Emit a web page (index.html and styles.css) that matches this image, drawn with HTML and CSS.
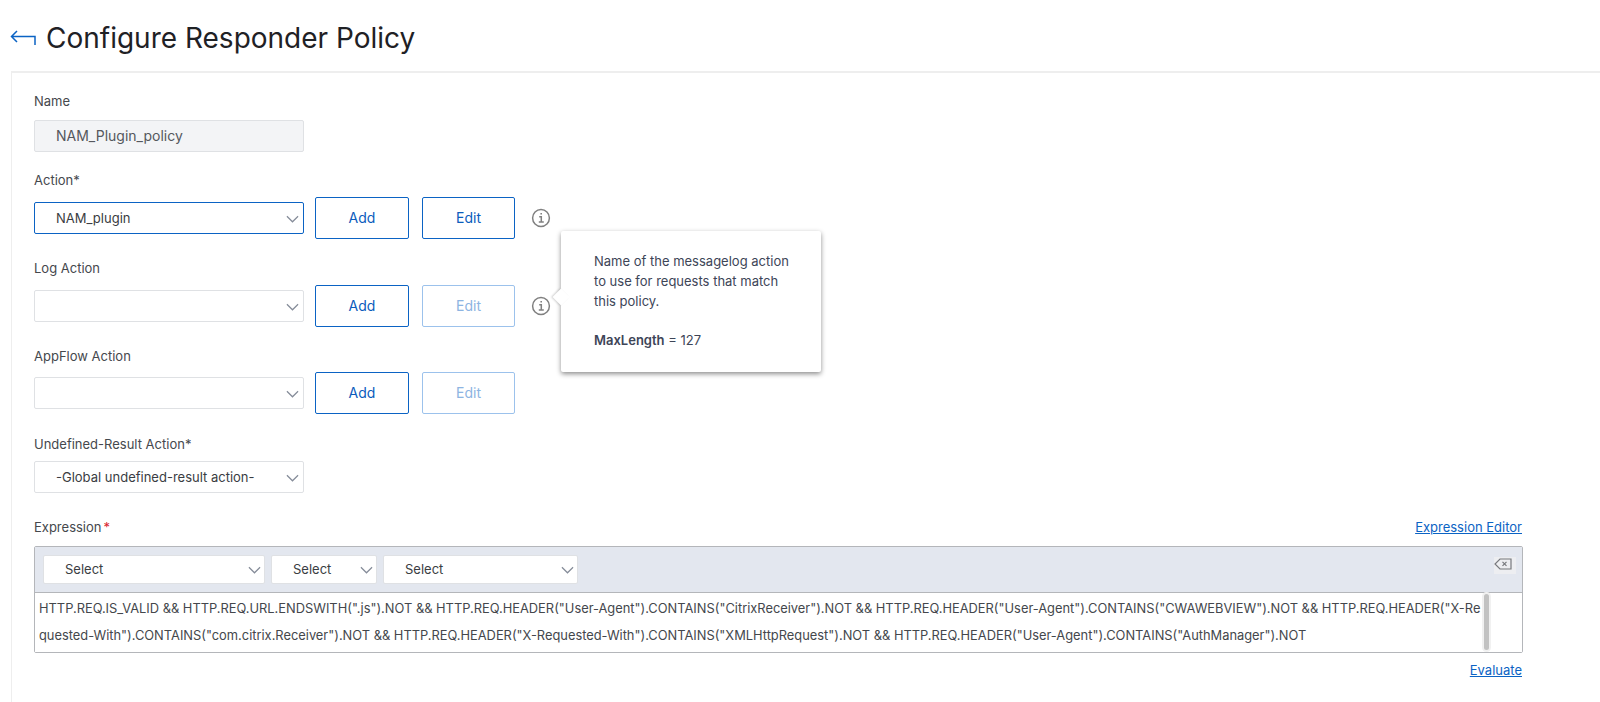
FILE: index.html
```html
<!DOCTYPE html>
<html lang="en">
<head>
<meta charset="utf-8">
<title>Configure Responder Policy</title>
<link rel="stylesheet" href="styles.css">
</head>
<body>
<header class="page-head">
  <svg class="back" width="26" height="16" viewBox="0 0 26 16" fill="none"><path d="M7 1 1.500 6.500 7 12M2 6.500h23v8.500" stroke="#0b63c4" stroke-width="1.500"/></svg>
  <h1 class="title">Configure Responder Policy</h1>
</header>
<main class="panel">
  <section class="field">
    <div class="label">Name</div>
    <div class="control disabled">NAM_Plugin_policy</div>
  </section>
  <section class="field action">
    <div class="label">Action*</div>
    <div class="row">
      <div class="control focus">NAM_plugin<svg class="chev" width="13" height="8" viewBox="0 0 14 8"><path d="M1 1l6 6 6-6" fill="none" stroke="#858c99" stroke-width="1.300"/></svg></div>
      <button class="btn">Add</button>
      <button class="btn">Edit</button>
      <svg class="info" width="20" height="20" viewBox="0 0 20 20" fill="none"><circle cx="10" cy="10" r="8.400" stroke="#808080" stroke-width="1.500"/><path d="M8.200 8.800h2.100v5M7.800 14h5M9.400 5.700h1.600" stroke="#808080" stroke-width="1.500"/></svg>
    </div>
  </section>
  <section class="field log">
    <div class="label">Log Action</div>
    <div class="row">
      <div class="control"><svg class="chev" width="13" height="8" viewBox="0 0 14 8"><path d="M1 1l6 6 6-6" fill="none" stroke="#858c99" stroke-width="1.300"/></svg></div>
      <button class="btn">Add</button>
      <button class="btn off">Edit</button>
      <svg class="info" width="20" height="20" viewBox="0 0 20 20" fill="none"><circle cx="10" cy="10" r="8.400" stroke="#808080" stroke-width="1.500"/><path d="M8.200 8.800h2.100v5M7.800 14h5M9.400 5.700h1.600" stroke="#808080" stroke-width="1.500"/></svg>
    </div>
  </section>
  <section class="field appflow">
    <div class="label">AppFlow Action</div>
    <div class="row">
      <div class="control"><svg class="chev" width="13" height="8" viewBox="0 0 14 8"><path d="M1 1l6 6 6-6" fill="none" stroke="#858c99" stroke-width="1.300"/></svg></div>
      <button class="btn">Add</button>
      <button class="btn off">Edit</button>
    </div>
  </section>
  <section class="field undefined">
    <div class="label">Undefined-Result Action*</div>
    <div class="control">-Global undefined-result action-<svg class="chev" width="13" height="8" viewBox="0 0 14 8"><path d="M1 1l6 6 6-6" fill="none" stroke="#858c99" stroke-width="1.300"/></svg></div>
  </section>
  <section class="field expr">
    <div class="expr-head">
      <div class="label">Expression<span class="req">*</span></div>
      <a class="link" href="#">Expression Editor</a>
    </div>
    <div class="editor">
      <div class="toolbar">
        <div class="mini w1">Select<svg class="chev" width="13" height="8" viewBox="0 0 14 8"><path d="M1 1l6 6 6-6" fill="none" stroke="#858c99" stroke-width="1.300"/></svg></div>
        <div class="mini w2">Select<svg class="chev" width="13" height="8" viewBox="0 0 14 8"><path d="M1 1l6 6 6-6" fill="none" stroke="#858c99" stroke-width="1.300"/></svg></div>
        <div class="mini w3">Select<svg class="chev" width="13" height="8" viewBox="0 0 14 8"><path d="M1 1l6 6 6-6" fill="none" stroke="#858c99" stroke-width="1.300"/></svg></div>
        <div class="clear"><svg width="18" height="12" viewBox="0 0 18 12" fill="none"><path d="M6 1h11v10H6L1 6z" stroke="#77797d" stroke-width="1.200"/><path d="M8.500 3.800l4 4M12.500 3.800l-4 4" stroke="#77797d" stroke-width="1.200"/></svg></div>
      </div>
      <div class="code">
        <p class="code-text">HTTP.REQ.IS_VALID &amp;&amp; HTTP.REQ.URL.ENDSWITH(".js").NOT &amp;&amp; HTTP.REQ.HEADER("User-Agent").CONTAINS("CitrixReceiver").NOT &amp;&amp; HTTP.REQ.HEADER("User-Agent").CONTAINS("CWAWEBVIEW").NOT &amp;&amp; HTTP.REQ.HEADER("X-Requested-With").CONTAINS("com.citrix.Receiver").NOT &amp;&amp; HTTP.REQ.HEADER("X-Requested-With").CONTAINS("XMLHttpRequest").NOT &amp;&amp; HTTP.REQ.HEADER("User-Agent").CONTAINS("AuthManager").NOT</p>
        <div class="scroll"></div>
      </div>
    </div>
    <div class="eval-row"><a class="link" href="#">Evaluate</a></div>
  </section>
  <aside class="tip">
    <p class="tip-text">Name of the messagelog action to use for requests that match this policy.</p>
    <p class="tip-text tip-max"><b>MaxLength</b> = 127</p>
  </aside>
</main>
</body>
</html>
```
FILE: styles.css
```css
* { box-sizing: border-box; }
html, body { margin: 0; height: 100%; }
body { background: #fff; font-family: Inter, "Liberation Sans", sans-serif; color: #3f4247; font-size: 13px; overflow: hidden; }
.page-head { height: 71px; display: flex; align-items: center; padding: 4px 0 0 10px; }
.title { margin: 0 0 0 10px; font-size: 28px; font-weight: 400; color: #1f2125; line-height: 36px; }
.panel { position: relative; margin-left: 11px; height: 631px; border-top: 2px solid #eeeeee; border-left: 1px solid #eeeeee; padding: 20px 0 0 22px; }
.label { font-size: 13px; line-height: 16px; color: #45484d; }
.field .control { margin-top: 11px; }
.control { position: relative; width: 270px; height: 32px; border: 1px solid #dfe1e4; border-radius: 2px; padding-left: 21px; line-height: 30px; font-size: 13px; color: #3a3d42; background: #fff; }
.control.disabled { background: #f3f4f6; color: #55585d; font-size: 14px; }
.control.focus { border-color: #0b63c4; }
.chev { position: absolute; right: 4px; top: 12px; }
.mini .chev { top: 10px; right: 3px; }
.row { display: flex; align-items: center; margin-top: 9px; }
.row .control { margin-top: 0; }
.btn { width: 94px; height: 42px; margin-left: 11px; border: 1px solid #0b63c4; border-radius: 2px; background: #fff; color: #0b5cbc; font: 14px Inter, "Liberation Sans", sans-serif; padding: 0 0 1px; }
.btn + .btn { margin-left: 13px; width: 93px; }
.btn.off { border-color: #9cc2ec; color: #8db4e2; }
.info { margin-left: 16px; }
.action { margin-top: 20px; }
.log { margin-top: 21px; }
.appflow { margin-top: 21px; }
.appflow .row { margin-top: 8px; }
.undefined { margin-top: 22px; }
.undefined .control { margin-top: 9px; }
.expr { margin-top: 26px; }
.expr-head { display: flex; justify-content: space-between; width: 1488px; }
.link { color: #0b63c4; font-size: 13px; line-height: 16px; text-decoration: underline; }
.req { color: #d9232e; margin-left: 2px; }
.editor { width: 1489px; height: 107px; margin-top: 11px; border: 1px solid #b4b6ba; border-radius: 2px; display: flex; flex-direction: column; }
.toolbar { position: relative; height: 46px; background: #e3e7ef; border-bottom: 1px solid #b4b6ba; display: flex; gap: 6px; padding: 8px 0 0 8px; }
.mini { position: relative; height: 29px; background: #fff; border: 1px solid #dfe1e4; border-radius: 2px; line-height: 27px; padding-left: 21px; color: #3a3d42; }
.w1 { width: 222px; }
.w2 { width: 106px; }
.w3 { width: 195px; }
.clear { position: absolute; right: 6px; top: 10px; width: 22px; height: 17px; background: #edeef1; display: flex; align-items: flex-start; justify-content: flex-start; padding-top: 1px; }
.code { position: relative; flex: 1; background: #fff; padding: 2px 0 0 4px; }
.code-text { margin: 0; width: 1442px; font-size: 12.860px; line-height: 27px; color: #44474c; word-break: break-all; }
.scroll { position: absolute; top: 1px; right: 33px; width: 5px; height: 56px; border-radius: 3px; background: #c2c2c2; box-shadow: 0 0 0 2px #f1f1f1; }
.eval-row { display: flex; justify-content: flex-end; width: 1488px; margin-top: 9px; }
.tip { position: absolute; left: 549px; top: 158px; width: 260px; height: 141px; background: #fff; border-radius: 2px; box-shadow: 0 2px 5px rgba(0,0,0,.45); padding: 20px 26px 0 33px; }
.tip::before { content: ""; position: absolute; left: -6px; top: 60px; width: 12px; height: 12px; background: #fff; transform: rotate(45deg); box-shadow: -1px 1px 2px rgba(0,0,0,.18); }
.tip-text { position: relative; margin: 0; font-size: 13px; line-height: 20px; color: #3d4557; }
.tip-max { margin-top: 19px; }
.tip b { font-weight: 600; }
```
